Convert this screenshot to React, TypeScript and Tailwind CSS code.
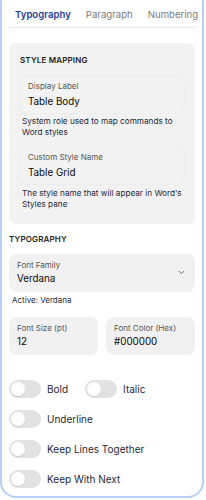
import { ChevronDown } from 'lucide-react';

function Field({ label, value }: { label: string; value: string }) {
  return (
    <div className="flex flex-col gap-[4px] rounded-[7px] bg-[#f3f3f3] px-[8px] pt-[4px] pb-[5px] shadow-[0_0_2px_rgba(0,0,0,0.08)]">
      <span className="text-[8px] leading-[10px] text-[#555]">{label}</span>
      <span className="text-[9.8px] leading-[13px] text-[#0a0a0a]">{value}</span>
    </div>
  );
}

function Toggle({ label }: { label: string }) {
  return (
    <div className="flex items-center gap-[6px]">
      <span className="flex h-[18px] w-[32px] items-center rounded-full bg-[#e2e2e2] px-[2px]">
        <span className="h-[14px] w-[14px] rounded-full bg-white shadow-[0_1px_1px_rgba(0,0,0,0.1)]" />
      </span>
      <span className="text-[10px] leading-[12px] text-[#1f2937]">{label}</span>
    </div>
  );
}

export default function App() {
  return (
    <div className="w-[204px] overflow-hidden rounded-b-2xl border-x-2 border-b-2 border-[#b9d0f6] bg-white px-[7px] pb-[8px] font-['Inter',sans-serif]">
      {/* tabs */}
      <div className="flex gap-[3px] border-b border-[#e4e4e4] pt-[9px] pb-[6px] whitespace-nowrap">
        <span className="px-[6px] text-[9.6px] leading-[12px] font-semibold text-[#1e3f99]">Typography</span>
        <span className="px-[6px] text-[9.6px] leading-[12px] text-[#7c7c80]">Paragraph</span>
        <span className="px-[6px] text-[9.6px] leading-[12px] text-[#7c7c80]">Numbering</span>
      </div>

      {/* style mapping */}
      <section className="mt-[15px] rounded-[7px] bg-[#f2f2f2] px-[11px] pt-[11px] pb-[14px]">
        <h3 className="text-[8px] leading-[12px] font-semibold tracking-[0.02em] text-[#222]">STYLE MAPPING</h3>
        <div className="mt-[11px]">
          <Field label="Display Label" value="Table Body" />
          <p className="mt-[3px] px-[2px] text-[8.2px] leading-[11px] text-[#1e293b]">
            System role used to map commands to Word styles
          </p>
        </div>
        <div className="mt-[10px]">
          <Field label="Custom Style Name" value="Table Grid" />
          <p className="mt-[4px] px-[2px] text-[8.2px] leading-[11px] text-[#1e293b]">
            The style name that will appear in Word's Styles pane
          </p>
        </div>
      </section>

      {/* typography */}
      <h3 className="mt-[9px] text-[8px] leading-[12px] font-semibold tracking-[0.02em] text-[#222]">TYPOGRAPHY</h3>
      <div className="mt-[9px] flex items-center justify-between rounded-[8px] bg-[#f1f1f1] pr-[9px] pl-[8px] pt-[6px] pb-[7px]">
        <div className="flex flex-col gap-[2px]">
          <span className="text-[8px] leading-[10px] text-[#555]">Font Family</span>
          <span className="text-[9.8px] leading-[13px] text-[#0a0a0a]">Verdana</span>
        </div>
        <ChevronDown size={9} strokeWidth={2} className="text-[#444]" />
      </div>
      <p className="mt-[3px] px-[3px] text-[8px] leading-[11px] text-[#1e293b]">Active: Verdana</p>

      <div className="mt-[11px] grid grid-cols-2 gap-[8px]">
        <div className="flex flex-col gap-[2px] rounded-[8px] bg-[#f1f1f1] px-[8px] pt-[6px] pb-[7px]">
          <span className="text-[8px] leading-[10px] text-[#555]">Font Size (pt)</span>
          <span className="text-[9.8px] leading-[13px] text-[#0a0a0a]">12</span>
        </div>
        <div className="flex flex-col gap-[2px] rounded-[8px] bg-[#f1f1f1] px-[8px] pt-[6px] pb-[7px]">
          <span className="text-[8px] leading-[10px] text-[#555]">Font Color (Hex)</span>
          <span className="text-[9.8px] leading-[13px] text-[#0a0a0a]">#000000</span>
        </div>
      </div>

      {/* toggles */}
      <div className="mt-[25px] flex flex-col gap-[12px]">
        <div className="flex items-center gap-[17px]">
          <Toggle label="Bold" />
          <Toggle label="Italic" />
        </div>
        <Toggle label="Underline" />
        <Toggle label="Keep Lines Together" />
        <Toggle label="Keep With Next" />
      </div>
    </div>
  );
}
